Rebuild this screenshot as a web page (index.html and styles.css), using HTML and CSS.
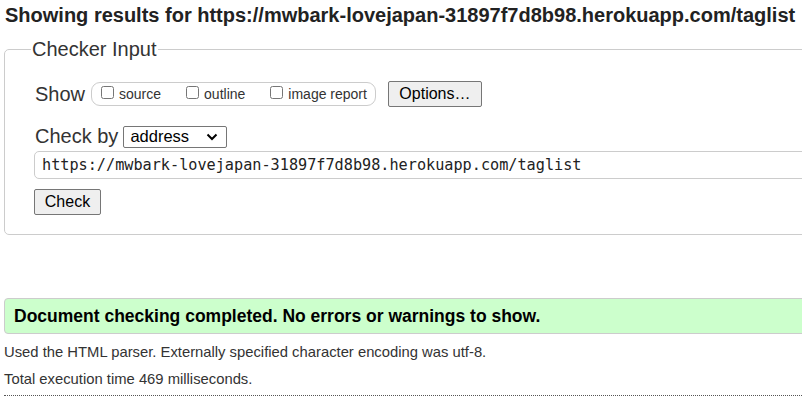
FILE: index.html
```html
<!DOCTYPE html>
<html>
<head>
<meta charset="utf-8">
<link rel="stylesheet" href="styles.css">
</head>
<body>
<div class="page">
  <h2 class="title">Showing results for https://mwbark-lovejapan-31897f7d8b98.herokuapp.com/taglist</h2>
  <fieldset class="checker">
    <legend class="legend">Checker Input</legend>
    <div class="row show-row">
      <span class="label">Show</span>
      <span class="opts">
        <label class="opt"><input type="checkbox" class="cb"><span>source</span></label>
        <label class="opt"><input type="checkbox" class="cb"><span>outline</span></label>
        <label class="opt"><input type="checkbox" class="cb"><span>image report</span></label>
      </span>
      <button class="btn options">Options…</button>
    </div>
    <div class="row by-row">
      <span class="label">Check by</span>
      <span class="select"><span>address</span><svg width="12" height="8" viewBox="0 0 12 8"><path d="M1.5 1.5 L6 6 L10.5 1.5" fill="none" stroke="#000" stroke-width="2"/></svg></span>
    </div>
    <div class="url">https://mwbark-lovejapan-31897f7d8b98.herokuapp.com/taglist</div>
    <div class="row"><button class="btn check">Check</button></div>
  </fieldset>
  <div class="success">Document checking completed. No errors or warnings to show.</div>
  <p class="info">Used the HTML parser. Externally specified character encoding was utf-8.</p>
  <p class="info">Total execution time 469 milliseconds.</p>
  <div class="dotted"></div>
</div>
</body>
</html>
```
FILE: styles.css
```css
html, body { margin: 0; padding: 0; overflow: hidden; background: #fff; }
body { font-family: "Liberation Sans", Arial, sans-serif; color: #222; }
.page { width: 1040px; padding: 0 0 0 4px; }
.title { margin: 0; padding: 4px 0 0 1px; font-size: 20px; font-weight: bold; line-height: 22px; color: #222; white-space: nowrap; }
.checker { margin: 12px 0 0 0; padding: 4px 0 19px 30px; border: 1px solid #ccc; border-radius: 5px; }
.legend { font-size: 20px; color: #333; padding: 0 1px; margin-left: -4px; line-height: 22px; }
.row { display: flex; align-items: center; }
.show-row { margin-top: 17px; height: 26px; }
.label { font-size: 20px; color: #333; }
.opts { display: flex; align-items: center; margin-left: 6px; height: 22px; border: 1px solid #ccc; border-radius: 9px; padding: 0 8px 0 9px; }
.opt { display: flex; align-items: center; font-size: 14px; color: #333; margin-right: 25px; }
.opt:last-child { margin-right: 0; }
.cb { margin: 0 5px 3px 0; width: 13px; height: 13px; }
.btn { font-family: "Liberation Sans", Arial, sans-serif; font-size: 16px; color: #000; background: #efefef; border: 1px solid #767676; border-radius: 2px; padding: 0 8px; height: 26px; }
.options { margin-left: 12px; width: 94px; }
.by-row { margin-top: 18px; }
.select { display: flex; align-items: center; justify-content: space-between; margin-left: 5px; width: 104px; height: 22px; box-sizing: border-box; border: 1px solid #767676; border-radius: 2px; padding: 0 8px 0 6px; font-size: 16.5px; color: #000; }
.url { margin-top: 3px; width: 900px; height: 28px; box-sizing: border-box; border: 1px solid #ccc; border-radius: 5px; padding: 0 7px; font-family: "DejaVu Sans Mono", monospace; font-size: 15.2px; line-height: 26px; color: #222; margin-left: -1px; }
.check { margin-top: 10px; margin-left: -1px; width: 67px; height: 26px; }
.success { margin-top: 63px; border: 1px solid #ccc; border-radius: 4px; background: #ccffcc; padding: 0 9px; height: 34px; line-height: 34px; font-size: 17.5px; font-weight: bold; color: #000; }
.info { margin: 0; font-size: 14.8px; color: #333; line-height: 18px; }
.info:first-of-type { margin-top: 9px; }
.info + .info { margin-top: 9px; }
.dotted { margin-top: 7px; border-top: 1px dotted #555; }
```
